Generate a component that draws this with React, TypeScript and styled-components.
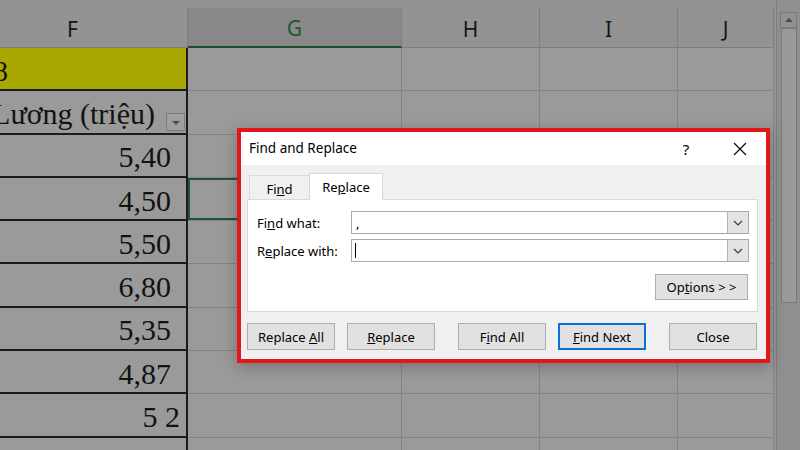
import styled, { createGlobalStyle } from 'styled-components'

const GlobalStyle = createGlobalStyle`
  html, body {
    margin: 0;
    padding: 0;
    background: #939393;
  }
  * {
    box-sizing: border-box;
  }
`

const COLS = '230px 214px 138px 138px 96px'
const ROW_H = 43.3

interface RowData {
  f: string
  kind?: 'title' | 'head'
  selected?: boolean
  pad?: number
}

const rows: RowData[] = [
  { f: '8', kind: 'title' },
  { f: 'Lương (triệu)', kind: 'head' },
  { f: '5,40' },
  { f: '4,50', selected: true },
  { f: '5,50' },
  { f: '6,80' },
  { f: '5,35' },
  { f: '4,87' },
  { f: '5 2', pad: 6 },
  { f: '5,45' },
]

const Page = styled.div`
  width: 800px;
  height: 450px;
  position: relative;
  display: flex;
  overflow: hidden;
  background: #939393;
`

const Sheet = styled.div`
  width: 776px;
  height: 450px;
  overflow: hidden;
  display: flex;
  flex-direction: column;
`

const SheetInner = styled.div`
  margin-left: -42px;
  display: flex;
  flex-direction: column;
`

const TopStrip = styled.div`
  height: 8px;
  background: #939393;
`

const HeaderRow = styled.div`
  display: grid;
  grid-template-columns: ${COLS};
  height: 40px;
`

const HeaderCell = styled.div<{ $active?: boolean }>`
  display: flex;
  align-items: center;
  justify-content: center;
  font-family: 'Noto Sans', 'Liberation Sans', sans-serif;
  font-size: 21px;
  color: ${(p) => (p.$active ? '#1d5a33' : '#161616')};
  background: ${(p) => (p.$active ? '#898989' : '#939393')};
  border-right: 1px solid #7e7e7e;
  border-bottom: ${(p) => (p.$active ? '2px solid #1c4e2e' : '1px solid #7e7e7e')};
  padding-top: 2px;
`

const Row = styled.div`
  display: grid;
  grid-template-columns: ${COLS};
  height: ${ROW_H}px;
  flex-shrink: 0;
`

const FCell = styled.div<{ $yellow?: boolean; $pad?: number }>`
  display: flex;
  align-items: center;
  justify-content: ${(p) => (p.$yellow ? 'flex-start' : 'flex-end')};
  gap: 11px;
  padding: 4px ${(p) => p.$pad ?? 15}px 0 ${(p) => (p.$yellow ? 35 : 0)}px;
  overflow: hidden;
  white-space: nowrap;
  background: ${(p) => (p.$yellow ? '#a9a800' : '#9a9a9a')};
  border-right: 2px solid #1b1b1b;
  border-bottom: 2px solid #1b1b1b;
  font-family: 'Liberation Serif', 'Times New Roman', serif;
  font-size: 30px;
  color: #121212;
`

const Cell = styled.div<{ $selected?: boolean }>`
  background: #9a9a9a;
  border-right: 1px solid #848484;
  border-bottom: 1px solid #848484;
  box-shadow: ${(p) => (p.$selected ? 'inset 0 0 0 2px #1e5532' : 'none')};
`

const FilterButton = styled.div`
  width: 19px;
  height: 18px;
  align-self: flex-end;
  margin-bottom: 2px;
  margin-right: 1px;
  flex-shrink: 0;
  border: 1px solid #7c7c7c;
  background: #9f9f9f;
  display: flex;
  align-items: center;
  justify-content: center;
  &::after {
    content: '';
    border-left: 4px solid transparent;
    border-right: 4px solid transparent;
    border-top: 4px solid #4a4a4a;
    margin-top: 2px;
  }
`

const Scrollbar = styled.div`
  width: 24px;
  height: 450px;
  background: #8f8f8f;
  border-left: 1px solid #7e7e7e;
  display: flex;
  flex-direction: column;
  align-items: center;
  padding-top: 12px;
`

const ScrollArrow = styled.div`
  width: 17px;
  height: 16px;
  border: 1px solid #7a7a7a;
  background: #929292;
  display: flex;
  align-items: center;
  justify-content: center;
  &::after {
    content: '';
    border-left: 4px solid transparent;
    border-right: 4px solid transparent;
    border-bottom: 4px solid #4a4a4a;
  }
`

const ScrollThumb = styled.div`
  width: 16px;
  height: 275px;
  background: #999999;
  border: 1px solid #7a7a7a;
`

/* dialog */

const Dialog = styled.div`
  position: absolute;
  left: 237px;
  top: 128px;
  width: 533px;
  height: 235px;
  border: 4px solid #e2161b;
  background: #f0f0f0;
  display: flex;
  flex-direction: column;
  box-shadow: 0 4px 14px rgba(0, 0, 0, 0.25);
  font-family: 'Noto Sans', 'Liberation Sans', sans-serif;
  font-size: 13px;
  color: #000;
`

const TitleBar = styled.div`
  height: 33px;
  background: #fff;
  display: flex;
  align-items: center;
  padding-left: 8px;
  padding-right: 3px;
`

const Title = styled.div`
  flex: 1;
  font-size: 13.5px;
  padding-bottom: 1px;
`

const TitleButton = styled.div`
  width: 46px;
  height: 30px;
  display: flex;
  align-items: center;
  justify-content: center;
  font-size: 15px;
  & + & {
    margin-left: 8px;
  }
`

const Body = styled.div`
  flex: 1;
  padding: 8px 8px 8px 6px;
  display: flex;
  flex-direction: column;
`

const Tabs = styled.div`
  display: flex;
  align-items: flex-end;
  height: 26px;
  padding-left: 2px;
`

const Tab = styled.div<{ $active?: boolean }>`
  width: ${(p) => (p.$active ? 74 : 60)}px;
  height: ${(p) => (p.$active ? 27 : 24)}px;
  margin-bottom: ${(p) => (p.$active ? -1 : 0)}px;
  position: relative;
  z-index: ${(p) => (p.$active ? 1 : 0)};
  background: ${(p) => (p.$active ? '#fff' : '#f0f0f0')};
  border: 1px solid #d9d9d9;
  border-bottom: none;
  display: flex;
  align-items: center;
  justify-content: center;
  padding-top: ${(p) => (p.$active ? 0 : 3)}px;
  ${(p) => (p.$active ? '' : 'border-right: none;')}
`

const Panel = styled.div`
  height: 113px;
  background: #fff;
  border: 1px solid #d9d9d9;
  padding: 11px 8px 0 9px;
  display: flex;
  flex-direction: column;
`

const Field = styled.div`
  display: flex;
  align-items: center;
  height: 23px;
  & + & {
    margin-top: 5px;
  }
`

const Label = styled.div`
  width: 94px;
`

const Combo = styled.div`
  flex: 1;
  height: 23px;
  border: 1px solid #a9a9a9;
  background: #fff;
  display: flex;
  align-items: center;
`

const ComboText = styled.div`
  flex: 1;
  padding-left: 4px;
  display: flex;
  align-items: center;
  height: 100%;
`

const Caret = styled.span`
  width: 1px;
  height: 15px;
  background: #000;
  margin-left: -1px;
`

const ComboButton = styled.div`
  width: 21px;
  height: 21px;
  background: #e3e3e3;
  border-left: 1px solid #b4b4b4;
  display: flex;
  align-items: center;
  justify-content: center;
`

const OptionsRow = styled.div`
  display: flex;
  justify-content: flex-end;
  margin-top: 12px;
  padding-right: 1px;
`

const Button = styled.div<{ $width?: number; $primary?: boolean; $spaced?: boolean }>`
  width: ${(p) => p.$width ?? 88}px;
  height: ${(p) => (p.$width ? 26 : 27)}px;
  background: #e1e1e1;
  border: ${(p) => (p.$primary ? '2px solid #0a6fd6' : '1px solid #adadad')};
  display: flex;
  align-items: center;
  justify-content: center;
  margin-left: ${(p) => (p.$spaced ? 11 : 0)}px;
  white-space: pre;
`

const Footer = styled.div`
  display: flex;
  gap: 12px;
  margin-top: 11px;
`

const Chevron = () => (
  <svg width="10" height="6" viewBox="0 0 10 6">
    <polyline points="1,1 5,5 9,1" fill="none" stroke="#3a3a3a" strokeWidth="1.2" />
  </svg>
)

const CloseIcon = () => (
  <svg width="14" height="14" viewBox="0 0 14 14">
    <path d="M1 1 L13 13 M13 1 L1 13" stroke="#111" strokeWidth="1.3" fill="none" />
  </svg>
)

const App = () => {
  return (
    <>
      <GlobalStyle />
      <Page>
        <Sheet>
          <SheetInner>
            <TopStrip />
            <HeaderRow>
              <HeaderCell>F</HeaderCell>
              <HeaderCell $active>G</HeaderCell>
              <HeaderCell>H</HeaderCell>
              <HeaderCell>I</HeaderCell>
              <HeaderCell>J</HeaderCell>
            </HeaderRow>
            {rows.map((row, i) => (
              <Row key={i}>
                <FCell $yellow={row.kind === 'title'} $pad={row.kind === 'head' ? 0 : row.pad}>
                  <span>{row.f}</span>
                  {row.kind === 'head' && <FilterButton />}
                </FCell>
                <Cell $selected={row.selected} />
                <Cell />
                <Cell />
                <Cell />
              </Row>
            ))}
          </SheetInner>
        </Sheet>
        <Scrollbar>
          <ScrollArrow />
          <ScrollThumb />
        </Scrollbar>

        <Dialog>
          <TitleBar>
            <Title>Find and Replace</Title>
            <TitleButton>?</TitleButton>
            <TitleButton>
              <CloseIcon />
            </TitleButton>
          </TitleBar>
          <Body>
            <Tabs>
              <Tab>
                <span>
                  Fi<u>n</u>d
                </span>
              </Tab>
              <Tab $active>
                <span>
                  Re<u>p</u>lace
                </span>
              </Tab>
            </Tabs>
            <Panel>
              <Field>
                <Label>
                  Fi<u>n</u>d what:
                </Label>
                <Combo>
                  <ComboText>,</ComboText>
                  <ComboButton>
                    <Chevron />
                  </ComboButton>
                </Combo>
              </Field>
              <Field>
                <Label>
                  R<u>e</u>place with:
                </Label>
                <Combo>
                  <ComboText>
                    <Caret />
                  </ComboText>
                  <ComboButton>
                    <Chevron />
                  </ComboButton>
                </Combo>
              </Field>
              <OptionsRow>
                <Button $width={93}>
                  <span>
                    Op<u>t</u>ions &gt; &gt;
                  </span>
                </Button>
              </OptionsRow>
            </Panel>
            <Footer>
              <Button>
                <span>
                  Replace <u>A</u>ll
                </span>
              </Button>
              <Button>
                <span>
                  <u>R</u>eplace
                </span>
              </Button>
              <Button $spaced>
                <span>
                  F<u>i</u>nd All
                </span>
              </Button>
              <Button $primary>
                <span>
                  <u>F</u>ind Next
                </span>
              </Button>
              <Button $spaced>
                <span>Close</span>
              </Button>
            </Footer>
          </Body>
        </Dialog>
      </Page>
    </>
  )
}

export default App
